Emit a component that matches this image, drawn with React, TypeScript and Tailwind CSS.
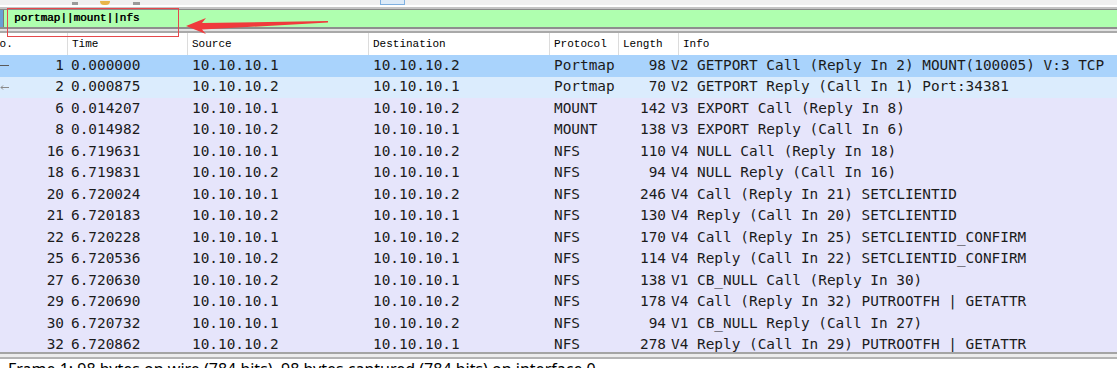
import * as React from "react";

type Row = {
  no: number;
  time: string;
  src: string;
  dst: string;
  proto: string;
  len: number;
  info: string;
};

const rows: Row[] = [
  { no: 1, time: "0.000000", src: "10.10.10.1", dst: "10.10.10.2", proto: "Portmap", len: 98, info: "V2 GETPORT Call (Reply In 2) MOUNT(100005) V:3 TCP" },
  { no: 2, time: "0.000875", src: "10.10.10.2", dst: "10.10.10.1", proto: "Portmap", len: 70, info: "V2 GETPORT Reply (Call In 1) Port:34381" },
  { no: 6, time: "0.014207", src: "10.10.10.1", dst: "10.10.10.2", proto: "MOUNT", len: 142, info: "V3 EXPORT Call (Reply In 8)" },
  { no: 8, time: "0.014982", src: "10.10.10.2", dst: "10.10.10.1", proto: "MOUNT", len: 138, info: "V3 EXPORT Reply (Call In 6)" },
  { no: 16, time: "6.719631", src: "10.10.10.1", dst: "10.10.10.2", proto: "NFS", len: 110, info: "V4 NULL Call (Reply In 18)" },
  { no: 18, time: "6.719831", src: "10.10.10.2", dst: "10.10.10.1", proto: "NFS", len: 94, info: "V4 NULL Reply (Call In 16)" },
  { no: 20, time: "6.720024", src: "10.10.10.1", dst: "10.10.10.2", proto: "NFS", len: 246, info: "V4 Call (Reply In 21) SETCLIENTID" },
  { no: 21, time: "6.720183", src: "10.10.10.2", dst: "10.10.10.1", proto: "NFS", len: 130, info: "V4 Reply (Call In 20) SETCLIENTID" },
  { no: 22, time: "6.720228", src: "10.10.10.1", dst: "10.10.10.2", proto: "NFS", len: 170, info: "V4 Call (Reply In 25) SETCLIENTID_CONFIRM" },
  { no: 25, time: "6.720536", src: "10.10.10.2", dst: "10.10.10.1", proto: "NFS", len: 114, info: "V4 Reply (Call In 22) SETCLIENTID_CONFIRM" },
  { no: 27, time: "6.720630", src: "10.10.10.2", dst: "10.10.10.1", proto: "NFS", len: 138, info: "V1 CB_NULL Call (Reply In 30)" },
  { no: 29, time: "6.720690", src: "10.10.10.1", dst: "10.10.10.2", proto: "NFS", len: 178, info: "V4 Call (Reply In 32) PUTROOTFH | GETATTR" },
  { no: 30, time: "6.720732", src: "10.10.10.1", dst: "10.10.10.2", proto: "NFS", len: 94, info: "V1 CB_NULL Reply (Call In 27)" },
  { no: 32, time: "6.720862", src: "10.10.10.2", dst: "10.10.10.1", proto: "NFS", len: 278, info: "V4 Reply (Call In 29) PUTROOTFH | GETATTR" },
];

const headFont = { fontFamily: '"Liberation Mono", monospace' };
const rowFont = { fontFamily: '"DejaVu Sans Mono", monospace' };

function rowBg(i: number) {
  if (i === 0) return "bg-[#a9d3fc]";
  if (i === 1) return "bg-[#dbecfd]";
  return "bg-[#e6e5fb]";
}

export default function App() {
  return (
    <div className="relative h-[368px] w-[1117px] overflow-hidden bg-white">
      {/* toolbar, mostly scrolled off the top */}
      <div className="flex h-[5px] items-end bg-[#f0f0f0]">
        <div className="ml-[72px] h-[3px] w-[6px] bg-[#9a9a9a]" />
        <div className="ml-[22px] h-[4px] w-[10px] rounded-b-sm bg-[#e8b54a]" />
        <div className="ml-[23px] h-[3px] w-[7px] bg-[#9a9a9a]" />
        <div className="ml-[240px] h-[5px] w-[25px] border-x border-b border-[#7fb0e0] bg-[#dceaf8]" />
      </div>
      <div className="h-[2px] bg-white" />
      <div className="h-[2px] bg-[#c4c4c4]" />
      <div className="h-[1px] bg-[#8a8a8a]" />

      {/* display filter */}
      <div className="flex h-[17px] bg-[#afffaf]">
        <div className="w-[3px] bg-[#6a9fd4]" />
        <div className="w-[1px] bg-[#7a7a7a]" />
        <div
          className="flex items-center whitespace-pre pl-[10px] text-[11px] text-black [text-shadow:0.5px_0_0_#000]"
          style={headFont}
        >
          portmap||mount||nfs
        </div>
      </div>
      <div className="h-[2px] bg-[#8e8e8e]" />
      <div className="h-[2px] bg-[#e2e2e2]" />
      <div className="h-[2px] bg-[#a9a9a9]" />

      {/* packet list */}
      <div className="h-[319px] overflow-hidden">
        <div className="flex h-[22px] items-center text-[11px] text-black" style={headFont}>
          <div className="flex h-full w-[68px] items-center border-r border-[#dcdcdc]">
            <span className="-ml-[7px]">No.</span>
          </div>
          <div className="flex h-full w-[120px] items-center border-r border-[#dcdcdc] pl-[4px]">Time</div>
          <div className="flex h-full w-[181px] items-center border-r border-[#dcdcdc] pl-[4px]">Source</div>
          <div className="flex h-full w-[181px] items-center border-r border-[#dcdcdc] pl-[4px]">Destination</div>
          <div className="flex h-full w-[69px] items-center border-r border-[#dcdcdc] pl-[4px]">Protocol</div>
          <div className="flex h-full w-[60px] items-center border-r border-[#dcdcdc] pl-[4px]">Length</div>
          <div className="flex h-full flex-1 items-center pl-[4px]">Info</div>
        </div>

        {rows.map((r, i) => (
          <div
            key={r.no}
            className={`flex h-[21.5px] items-center whitespace-nowrap text-[14.4px] text-[#1b1b1b] ${rowBg(i)}`}
            style={rowFont}
          >
            <div className="flex w-[65px] items-center justify-between pr-[1px]">
              <span className="w-[9px]">
                {i === 0 && (
                  <svg width="9" height="9" viewBox="0 0 9 9">
                    <line x1="0" y1="4.5" x2="9" y2="4.5" stroke="#5a5a5a" strokeWidth="1" />
                  </svg>
                )}
                {i === 1 && (
                  <svg width="9" height="9" viewBox="0 0 9 9">
                    <line x1="1" y1="4.5" x2="9" y2="4.5" stroke="#8a8a8a" strokeWidth="1" />
                    <polyline points="3,2.5 1,4.5 3,6.5" fill="none" stroke="#8a8a8a" strokeWidth="1" />
                  </svg>
                )}
              </span>
              <span>{r.no}</span>
            </div>
            <div className="w-[123px] pl-[6px]">{r.time}</div>
            <div className="w-[181px] pl-[4px]">{r.src}</div>
            <div className="w-[181px] pl-[4px]">{r.dst}</div>
            <div className="w-[69px] pl-[4px]">{r.proto}</div>
            <div className="w-[47px] text-right">{r.len}</div>
            <div className="flex-1 pl-[5px]">{r.info}</div>
          </div>
        ))}
      </div>

      {/* splitter + status */}
      <div className="h-[2px] bg-[#a4a4a4]" />
      <div className="h-[3px] bg-[#ececec]" />
      <div className="h-[2px] bg-[#b4b4b4]" />
      <div
        className="whitespace-nowrap pl-[8px] pt-[2px] text-[16px] leading-[16px] text-black"
        style={{ fontFamily: '"Noto Sans", sans-serif' }}
      >
        Frame 1: 98 bytes on wire (784 bits), 98 bytes captured (784 bits) on interface 0
      </div>

      {/* annotation: red box and arrow */}
      <div className="pointer-events-none absolute left-[7px] top-[8px] h-[29px] w-[172px] border-[1.5px] border-[#e5484b]" />
      <svg
        className="pointer-events-none absolute left-0 top-0"
        width="340"
        height="40"
        viewBox="0 0 340 40"
      >
        <polygon
          points="186,26 206,18 202,23 328,21 328,22.6 202,29.5 206,34"
          fill="#f03a3c"
        />
      </svg>
    </div>
  );
}
